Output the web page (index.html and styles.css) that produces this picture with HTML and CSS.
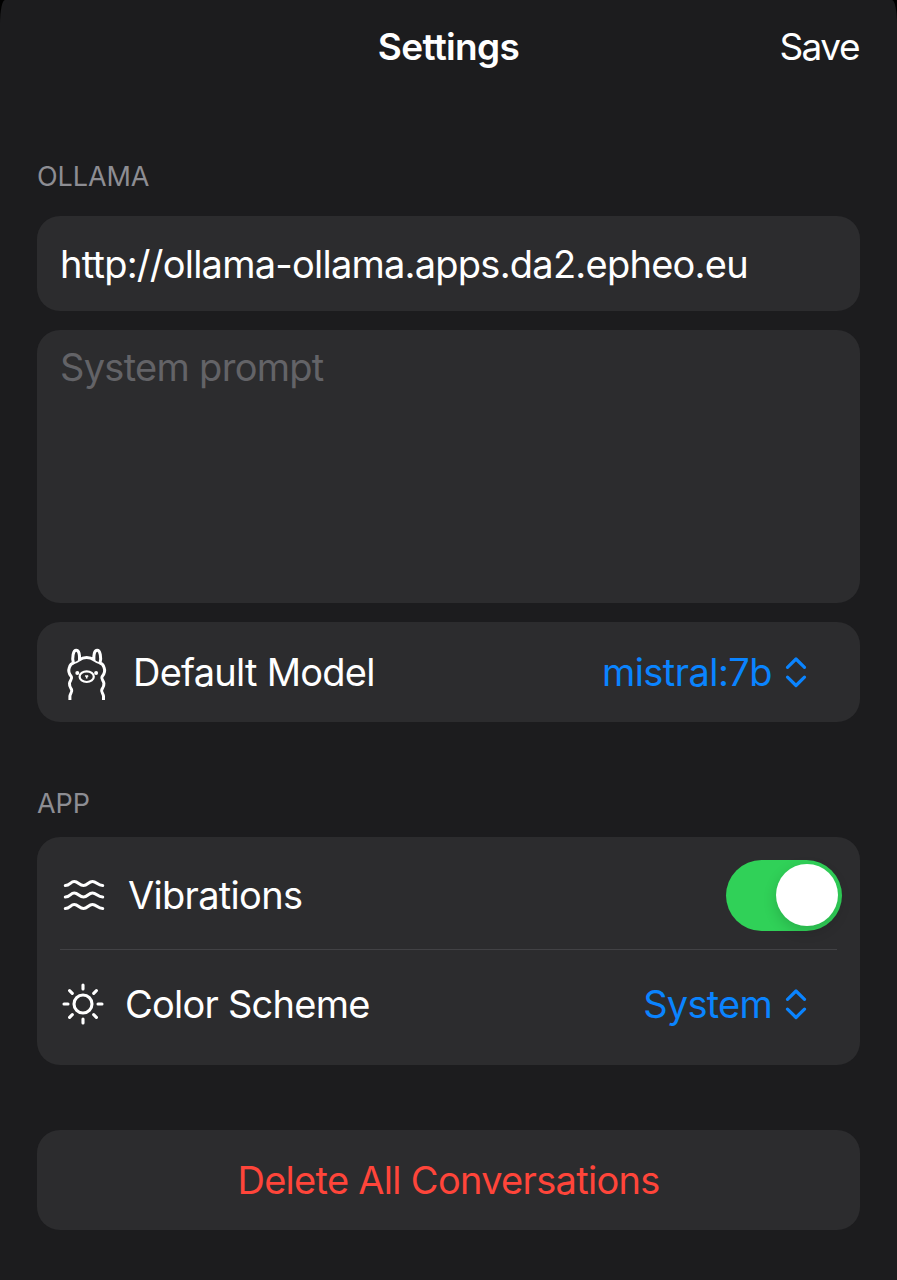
FILE: index.html
```html
<!DOCTYPE html>
<html lang="en">
<head>
<meta charset="utf-8">
<title>Settings</title>
<link rel="stylesheet" href="styles.css">
</head>
<body>
<main class="sheet">
  <header class="header">
    <h1 class="title">Settings</h1>
    <button class="save">Save</button>
  </header>

  <h2 class="section-label">OLLAMA</h2>
  <div class="card url-card"><span class="url">http://ollama-ollama.apps.da2.epheo.eu</span></div>
  <div class="card prompt-card"><span class="placeholder">System prompt</span></div>
  <div class="card model-card">
    <svg class="llama" viewBox="62 646 50 56" fill="none" stroke="#fff" stroke-width="3" stroke-linejoin="round">
      <path d="M69.900 700V696.500C69.900 693.500 72.600 692 71.600 689.600C70.400 687.500 69.200 686 69.500 683.300C69.800 680.500 72.600 679 71.400 676.800C68.900 674 68.200 670.500 69.400 667.300C70.100 665.200 71.500 663.500 73.400 663C71.800 657.500 73.300 650.300 76.200 650.300C79.100 650.300 79.800 655 79.500 659.800C83.200 656.600 90 656.600 93.900 659.800C93.600 655 94.300 650.300 97.200 650.300C100.100 650.300 101.600 657.500 100 663C101.900 663.500 103.300 665.200 104 667.300C105.200 670.500 104.500 674 102 676.800C100.800 679 103.600 680.500 103.900 683.300C104.200 686 103 687.500 101.800 689.600C100.800 692 103.500 693.500 103.500 696.500V700"/>
      <path stroke-width="2" d="M73.600 663.200C75.600 662.700 78.700 662 79.500 659.500M99.800 663.200C97.800 662.700 94.700 662 93.900 659.500"/>
      <ellipse cx="86.700" cy="676.700" rx="7.100" ry="5.300" stroke-width="2.200"/>
      <path stroke-width="1.600" d="M85.200 675.600L86.700 676.500L88.200 675.600M86.700 676.500V678.600"/>
      <circle cx="77.300" cy="672.900" r="2" fill="#fff" stroke="none"/>
      <circle cx="96.100" cy="672.900" r="2" fill="#fff" stroke="none"/>
    </svg>
    <span class="row-label default-model">Default Model</span>
    <span class="value mistral">mistral:7b</span>
    <svg class="chevrons" viewBox="0 0 22 32"><path d="M2.500 11.300L11 3L19.500 11.300M2.500 21.200L11 29.500L19.500 21.200"/></svg>
  </div>

  <h2 class="section-label app-label">APP</h2>
  <div class="card app-card">
    <div class="row vibration-row">
      <svg class="waves" viewBox="0 0 42 34">
        <path d="M2.300 7.500C7 7.500 7.500 3.500 11.300 3.500S16.500 7.500 20.500 7.500S25.500 3.500 29.500 3.500S34.500 7.500 39.700 7.500"/>
        <path d="M2.300 19C7 19 7.500 15 11.300 15S16.500 19 20.500 19S25.500 15 29.500 15S34.500 19 39.700 19"/>
        <path d="M2.300 30.500C7 30.500 7.500 26.500 11.300 26.500S16.500 30.500 20.500 30.500S25.500 26.500 29.500 26.500S34.500 30.500 39.700 30.500"/>
      </svg>
      <span class="row-label vibrations">Vibrations</span>
      <span class="toggle"><span class="knob"></span></span>
    </div>
    <div class="row scheme-row">
      <svg class="sun" viewBox="-21 -21 42 42">
        <circle r="9"/>
        <path d="M0-19V-15M0 15V19M-19 0H-15M15 0H19M-13.400-13.400L-10.700-10.700M10.700 10.700L13.400 13.400M-13.400 13.400L-10.700 10.700M10.700-10.700L13.400-13.400"/>
      </svg>
      <span class="row-label scheme">Color Scheme</span>
      <span class="value system">System</span>
      <svg class="chevrons" viewBox="0 0 22 32"><path d="M2.500 11.300L11 3L19.500 11.300M2.500 21.200L11 29.500L19.500 21.200"/></svg>
    </div>
  </div>

  <button class="card delete-card"><span class="delete">Delete All Conversations</span></button>
</main>
</body>
</html>
```
FILE: styles.css
```css
* { box-sizing: border-box; }
body {
  margin: 0;
  background: #000;
  color: #fff;
  font-family: Inter, "Liberation Sans", sans-serif;
  font-size: 38px;
  line-height: 48px;
  letter-spacing: -0.76px;
}
button { border: 0; background: none; color: inherit; font: inherit; letter-spacing: inherit; padding: 0; }
svg { display: block; flex: none; }
.sheet {
  height: 1280px;
  padding: 0 37px;
  background: #1c1c1e;
  border-radius: 5px 5px 0 0 / 24px 24px 0 0;
  display: flex;
  flex-direction: column;
  overflow: hidden;
  white-space: nowrap;
}
.header {
  height: 94px;
  display: grid;
  grid-template-columns: 1fr auto 1fr;
  align-items: center;
}
.title { grid-column: 2; margin: 0; font-size: 37px; font-weight: 560; letter-spacing: -0.65px; }
.save { justify-self: end; font-size: 37px; letter-spacing: -1.5px; padding-right: 1px; }
.section-label {
  margin: 67px 0 0;
  height: 32px;
  line-height: 32px;
  font-size: 27px;
  font-weight: 400;
  letter-spacing: -0.1px;
  color: #8d8d93;
}
.card {
  flex: none;
  display: flex;
  align-items: center;
  background: #2c2c2e;
  border-radius: 23px;
  padding: 0 23px;
}
.url-card { height: 95px; margin-top: 23px; }
.prompt-card { height: 273px; margin-top: 19px; align-items: flex-start; padding-top: 13px; }
.model-card { height: 100px; margin-top: 19px; padding: 0 53px 0 25px; }
.placeholder { color: #636367; letter-spacing: -0.7px; }
.llama { width: 50px; height: 56px; margin-top: 4px; }
.default-model { margin-left: 21px; }
.value { margin-left: auto; color: #0a84ff; }
.mistral { letter-spacing: -0.55px; }
.chevrons { width: 22px; height: 32px; margin-left: 13px; fill: none; stroke: #0a84ff; stroke-width: 3.2; stroke-linecap: round; stroke-linejoin: round; }
.app-label { margin-top: 66px; }
.app-card { height: 228px; margin-top: 17px; display: block; }
.row { display: flex; align-items: center; }
.vibration-row { height: 113px; padding-top: 4px; border-bottom: 1px solid #424245; }
.waves { width: 42px; height: 34px; margin-left: 3px; }
.waves, .sun { fill: none; stroke: #fff; stroke-width: 3.1; stroke-linecap: round; }
.vibrations { margin-left: 23px; letter-spacing: -0.7px; }
.toggle {
  width: 116px;
  height: 71px;
  margin: 0 -5px 0 auto;
  padding: 4px;
  border-radius: 36px;
  background: #30d158;
  display: flex;
  justify-content: flex-end;
}
.knob { width: 62px; height: 62px; border-radius: 50%; background: #fff; box-shadow: 0 5px 14px rgba(0,0,0,.16); }
.scheme-row { height: 107px; padding-right: 30px; }
.sun { width: 42px; height: 42px; margin-left: 2px; }
.scheme { margin-left: 21px; }
.delete-card { height: 100px; margin-top: 65px; justify-content: center; color: #ff453a; }
.delete { letter-spacing: -0.7px; }
```
